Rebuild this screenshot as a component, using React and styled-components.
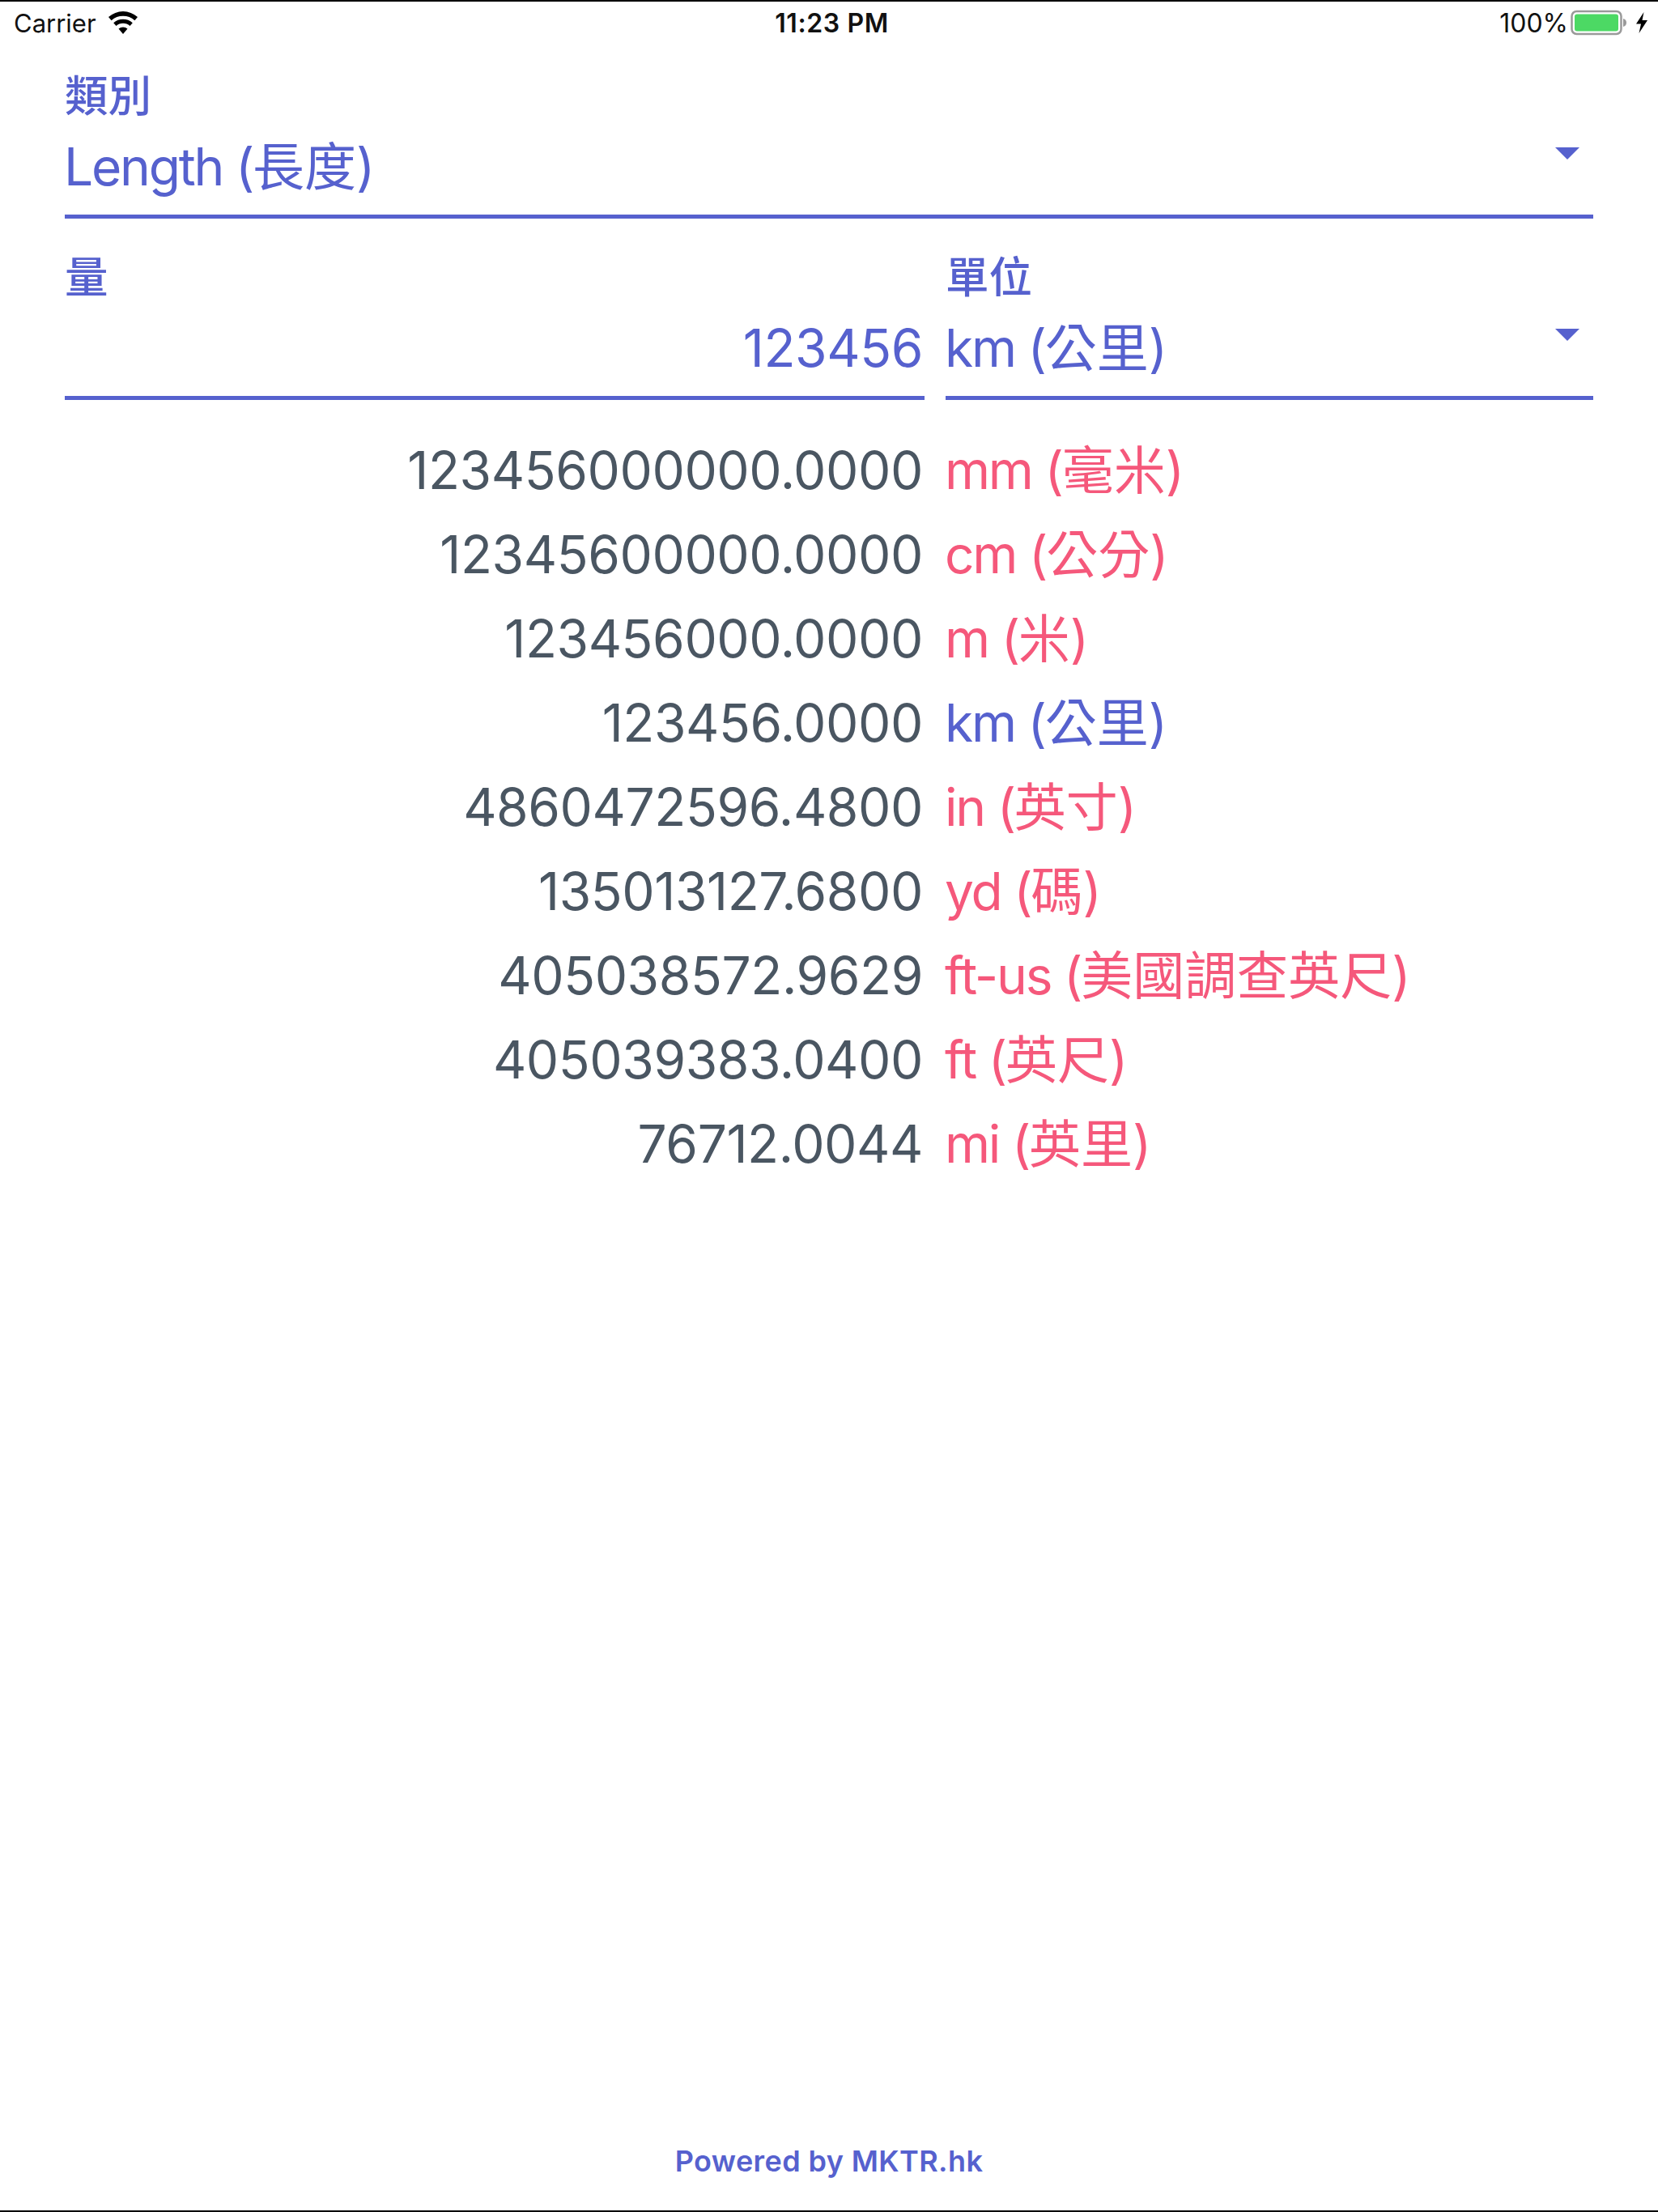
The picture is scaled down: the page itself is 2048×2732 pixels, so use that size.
import React from "react";
import styled, { createGlobalStyle } from "styled-components";

const Global = createGlobalStyle`
  html, body { margin: 0; padding: 0; background: #fff; }
  * { box-sizing: border-box; }
`;
const FONT = `Inter, "Noto Sans CJK TC", sans-serif`;
const INDIGO = "#5661ce";
const ROSE = "#f5587b";
const SLATE = "#4a5662";

const Screen = styled.div`
  width: 2048px; height: 2732px; display: flex; flex-direction: column;
  border-top: 2px solid #000; border-bottom: 2px solid #000;
  font-family: ${FONT}; background: #fff; overflow: hidden;
`;
const StatusBar = styled.div`
  height: 52px; padding: 0 12px 0 17px; display: grid; grid-template-columns: 1fr auto 1fr; align-items: center;
  color: #111; font-size: 31px; font-family: Inter, sans-serif;
`;
const StatusLeft = styled.div`display: flex; align-items: center; gap: 14px;`;
const StatusTime = styled.div`font-weight: 600; font-size: 32px; letter-spacing: 0.6px; padding-left: 2px;`;
const StatusRight = styled.div`display: flex; align-items: center; justify-content: flex-end; gap: 3px; font-size: 32px;`;
const BatteryWrap = styled.div`display: flex; align-items: center; gap: 8px;`;
const Content = styled.div`padding: 34px 80px 0; display: flex; flex-direction: column; flex: 1;`;
const Label = styled.div`
  font-size: 53.5px; line-height: 62px; font-weight: 500; color: ${INDIGO};
`;
const ValueLine = styled.div`
  height: 120px; border-bottom: 5px solid ${INDIGO}; position: relative;
  display: flex; align-items: center; justify-content: ${p => p.$right ? "flex-end" : "flex-start"};
  font-size: 64px; color: ${INDIGO}; line-height: 80px; padding-bottom: 3px;
  padding-right: ${p => p.$right ? "2px" : "0"};
`;
const Caret = styled.span`
  position: absolute; right: 17px; top: 32px; width: 0; height: 0;
  border-left: 15px solid transparent; border-right: 15px solid transparent; border-top: 15px solid ${INDIGO};
`;
const Latin = styled.span`letter-spacing: -2.2px; margin-left: -1px;`;
const Digits = styled.span`letter-spacing: -0.4px;`;
const FieldRow = styled.div`display: grid; grid-template-columns: 1062px 800px; column-gap: 26px; margin-top: 42px;`;
const List = styled.div`margin-top: 35px; display: flex; flex-direction: column;`;
const Row = styled.div`
  display: grid; grid-template-columns: 1062px 800px; column-gap: 26px; height: 104px; align-items: center;
  font-size: 64px; line-height: 104px;
`;
const Amount = styled.div`text-align: right; color: ${SLATE}; padding-right: 2px;`;
const Unit = styled.div`color: ${p => p.$active ? INDIGO : ROSE};`;
const Footer = styled.div`
  margin-top: auto; height: 81px; text-align: center; font-size: 36px; letter-spacing: 0.4px; font-weight: 600; color: ${INDIGO}; line-height: 40px;
`;

const rows = [
  ["123456000000.0000", "mm (", "毫米"],
  ["12345600000.0000", "cm (", "公分"],
  ["123456000.0000", "m (", "米"],
  ["123456.0000", "km (", "公里", true],
  ["4860472596.4800", "in (", "英寸"],
  ["135013127.6800", "yd (", "碼"],
  ["405038572.9629", "ft-us (", "美國調查英尺"],
  ["405039383.0400", "ft (", "英尺"],
  ["76712.0044", "mi (", "英里"],
];

const Wifi = () => (
  <svg width="38" height="28" viewBox="0 0 38 28">
    <path d="M19 28 L13.5 21.5 A8.5 8.5 0 0 1 24.5 21.5 Z" fill="#000" />
    <path d="M10.5 18 L7.2 14.2 A18 18 0 0 1 30.8 14.2 L27.5 18 A13 13 0 0 0 10.5 18 Z" fill="#000" />
    <path d="M4.6 11.2 L1 7 A27 27 0 0 1 37 7 L33.4 11.2 A22 22 0 0 0 4.6 11.2 Z" fill="#000" />
  </svg>
);
const Battery = () => (
  <svg width="72" height="32" viewBox="0 0 72 32">
    <rect x="1.5" y="2" width="61" height="28" rx="6" fill="none" stroke="#9a9a9a" strokeWidth="2.5" />
    <rect x="5" y="5.5" width="54" height="21" rx="3" fill="#4cd964" />
    <path d="M65 11 Q69 12 69 16 Q69 20 65 21 Z" fill="#9a9a9a" />
  </svg>
);
const Bolt = () => (
  <svg width="16" height="26" viewBox="0 0 16 26">
    <path d="M10.5 0 L1 14.5 H7 L4.5 26 L15 10 H8.5 Z" fill="#000" />
  </svg>
);

export default function App() {
  return (
    <Screen>
      <Global />
      <StatusBar>
        <StatusLeft>Carrier <Wifi /></StatusLeft>
        <StatusTime>11:23 PM</StatusTime>
        <StatusRight>100% <BatteryWrap><Battery /><Bolt /></BatteryWrap></StatusRight>
      </StatusBar>
      <Content>
        <Label>類別</Label>
        <ValueLine><span><Latin>Length (</Latin>長度)</span><Caret /></ValueLine>
        <FieldRow>
          <div>
            <Label>量</Label>
            <ValueLine $right><Digits>123456</Digits></ValueLine>
          </div>
          <div>
            <Label>單位</Label>
            <ValueLine><span><Latin>km (</Latin>公里)</span><Caret /></ValueLine>
          </div>
        </FieldRow>
        <List>
          {rows.map(([a, latin, cjk, active]) => (
            <Row key={latin}>
              <Amount><Digits>{a}</Digits></Amount>
              <Unit $active={active}><Latin>{latin}</Latin>{cjk})</Unit>
            </Row>
          ))}
        </List>
        <Footer>Powered by MKTR.hk</Footer>
      </Content>
    </Screen>
  );
}
